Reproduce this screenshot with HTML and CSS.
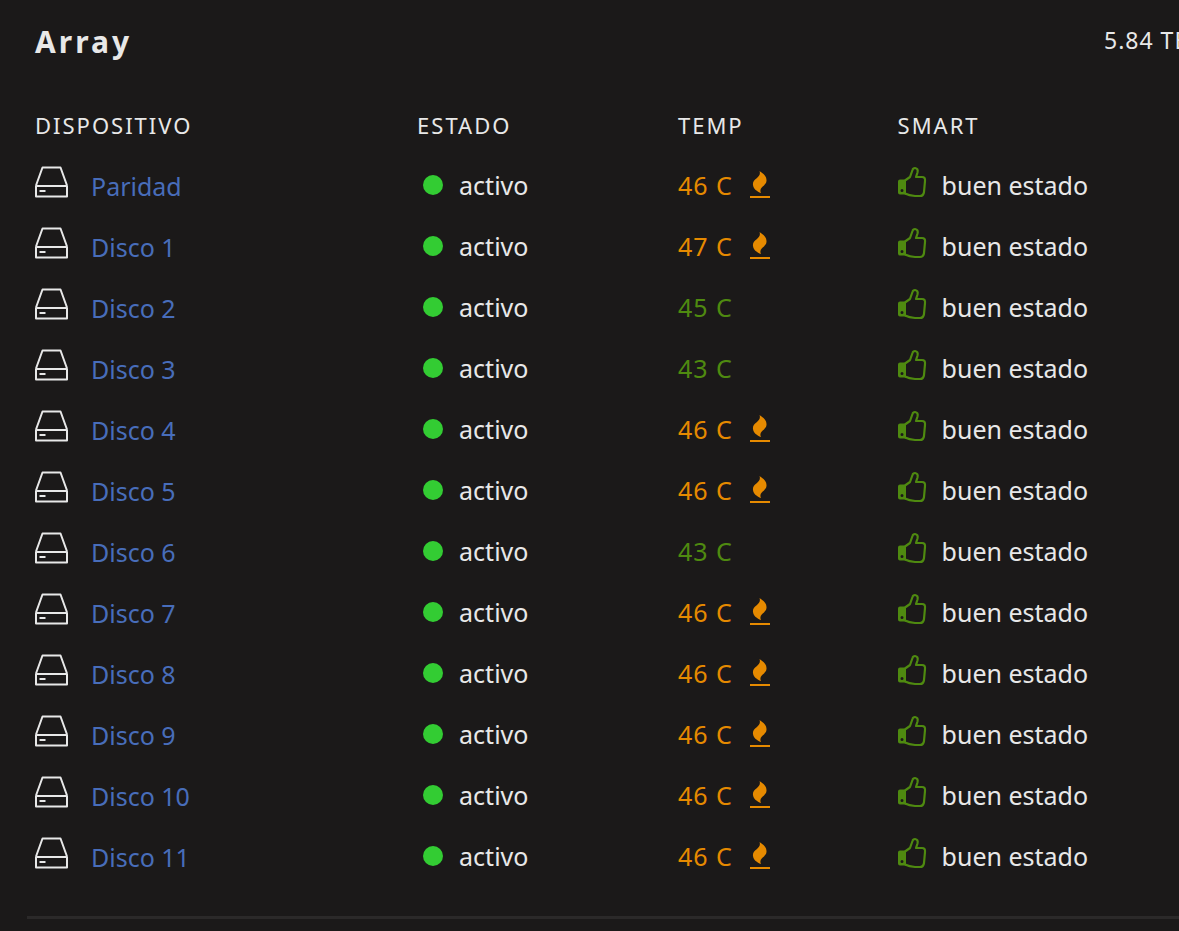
FILE: index.html
```
<!DOCTYPE html>
<html lang="es">
<head>
<meta charset="utf-8">
<meta name="viewport" content="width=device-width, initial-scale=1">
<title>Array</title>
<link rel="stylesheet" href="styles.css">
</head>
<body>
<svg class="sprite" aria-hidden="true">
  <symbol id="disk" viewBox="0 0 34 32">
    <path d="M1 19.5L7.500 1.500H25.500L32 19.500M1 20H32V30.500H1Z" fill="none" stroke="currentColor" stroke-width="2" stroke-linejoin="round"/>
    <path d="M4.500 25H10.500" stroke="currentColor" stroke-width="2"/>
  </symbol>
  <symbol id="fire" viewBox="0 0 22 28">
    <path d="M10.500 0C13 7 3 7.500 4 14C4.500 18 8 20.500 12 22C9 16 18 15 17.500 9C17.500 5 14 2.500 10.500 0Z" fill="currentColor"/>
    <path d="M1 26H21" stroke="currentColor" stroke-width="2"/>
  </symbol>
  <symbol id="thumb" viewBox="0 0 30 32">
    <path d="M7 14.500L12 11L14.500 4Q15 2 17 2Q20.500 2.500 19.500 6.500L18 11H24Q27.500 11 27 15L26 26Q25.500 30 22 30H17Q11 29.500 7 27.500" fill="none" stroke="currentColor" stroke-width="2.2" stroke-linejoin="round"/>
    <path fill-rule="evenodd" d="M2 13.500H8V28.500H2Q0 28.500 0 26.500V15.500Q0 13.500 2 13.500ZM4 23A1.500 1.500 0 1 0 4 26A1.500 1.500 0 1 0 4 23Z" fill="currentColor"/>
  </symbol>
</svg>
<main class="panel">
  <header class="panel-header">
    <h1 class="title">Array</h1>
    <p class="capacity">5.84 TB</p>
  </header>
  <table class="disks">
    <thead>
      <tr><th class="col-device" scope="col">DISPOSITIVO</th><th class="col-state" scope="col">ESTADO</th><th class="col-temp" scope="col">TEMP</th><th scope="col">SMART</th></tr>
    </thead>
    <tbody id="rows"></tbody>
  </table>
</main>
<script src="app.js"></script>
</body>
</html>
```
FILE: app.js
```
const temps = [46, 47, 45, 43, 46, 46, 43, 46, 46, 46, 46, 46];
const icon = (name) => `<svg class="icon-${name}" aria-hidden="true"><use href="#${name}"/></svg>`;

document.getElementById("rows").innerHTML = temps.map((temp, i) => {
  const hot = temp > 45;
  return `<tr>
    <td><div class="cell device">${icon("disk")}<a class="disk-link" href="#">${i ? "Disco " + i : "Paridad"}</a></div></td>
    <td><div class="cell state"><span class="dot"></span><span>activo</span></div></td>
    <td><div class="cell temp ${hot ? "hot" : "cool"}"><span>${temp} C</span>${hot ? icon("fire") : ""}</div></td>
    <td><div class="cell smart">${icon("thumb")}<span>buen estado</span></div></td>
  </tr>`;
}).join("");
```
FILE: styles.css
```
body {
  margin: 0;
  background: #1b1919;
  color: #e8e8e8;
  font-family: "Noto Sans", "Open Sans", sans-serif;
  font-size: 25px;
  line-height: 32px;
}

.sprite {
  display: none;
}

.panel {
  margin-left: 27px;
  padding: 20px 0 30px 8px;
  border-bottom: 3px solid #2b2929;
  overflow: hidden;
}

.panel-header {
  display: flex;
  justify-content: space-between;
  height: 76px;
}

.title {
  margin: 0;
  font-size: 30px;
  line-height: 43px;
  letter-spacing: 3px;
}

.capacity {
  width: 75px;
  margin: 0;
  font-size: 23px;
  line-height: 40px;
  letter-spacing: 1px;
  white-space: nowrap;
}

.disks {
  width: 100%;
  table-layout: fixed;
  border-collapse: collapse;
}

.disks th {
  height: 58px;
  padding: 0;
  font-size: 22px;
  font-weight: 400;
  letter-spacing: 2px;
  text-align: left;
}

.disks td {
  height: 61px;
  padding: 0;
}

.col-device {
  width: 33.4%;
}

.col-state {
  width: 22.8%;
}

.col-temp {
  width: 19.2%;
}

.cell {
  display: flex;
  align-items: center;
  white-space: nowrap;
}

.device {
  gap: 22px;
}

.disk-link {
  padding-top: 2px;
  color: #486dba;
  text-decoration: none;
}

.state {
  gap: 16px;
  padding-left: 6px;
}

.dot {
  width: 20px;
  height: 20px;
  border-radius: 50%;
  background: #33cc33;
}

.temp {
  gap: 16px;
  letter-spacing: 1px;
}

.hot {
  color: #e68a00;
}

.cool {
  color: #4f8a10;
}

.smart {
  gap: 14px;
}

.icon-disk {
  width: 34px;
  height: 32px;
  margin-bottom: 6px;
}

.icon-fire {
  width: 22px;
  height: 28px;
}

.icon-thumb {
  width: 30px;
  height: 32px;
  margin-bottom: 6px;
  color: #4f8a10;
}
```
